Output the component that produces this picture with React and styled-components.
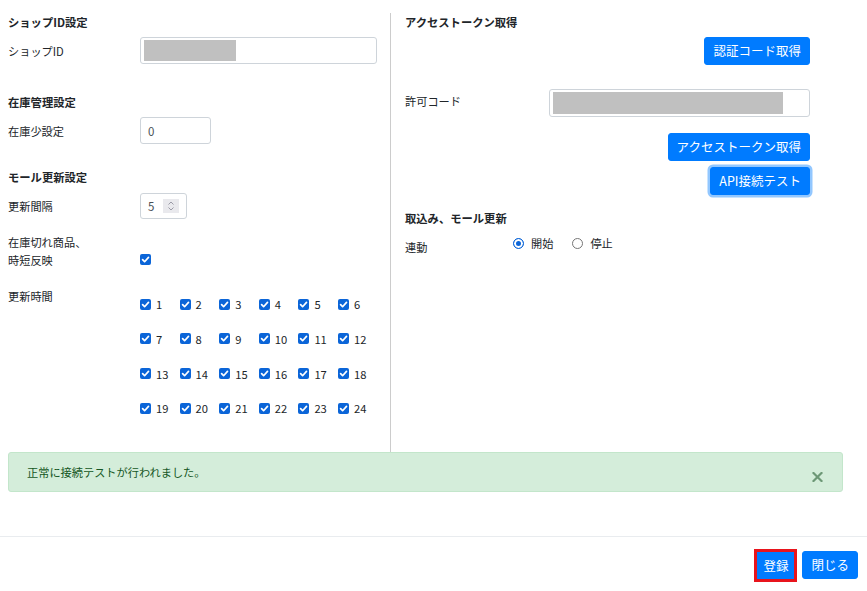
import React from 'react';
import styled, { createGlobalStyle } from 'styled-components';

const Global = createGlobalStyle`
  html, body { margin: 0; padding: 0; background: #fff; }
  body {
    font-family: "Noto Sans CJK JP", "Noto Sans", sans-serif;
    color: #212529;
    font-size: 11.2px;
  }
  * { box-sizing: border-box; }
`;

const Body = styled.div`
  padding: 13px 24px 0 8px;
`;

const Columns = styled.div`
  display: grid;
  grid-template-columns: 383px 1fr;
`;

const LeftCol = styled.div`
  display: flex;
  flex-direction: column;
  border-right: 1px solid #cccccc;
  padding-bottom: 26px;
`;

const RightCol = styled.div`
  display: flex;
  flex-direction: column;
  padding: 0 33px 0 14px;
`;

const Title = styled.div`
  font-weight: 700;
  font-size: 11.3px;
  line-height: 18px;
  margin-top: ${p => p.$mt || 0}px;
`;

const Row = styled.div`
  display: flex;
  align-items: ${p => p.$align || 'center'};
  margin-top: ${p => p.$mt || 0}px;
`;

const Label = styled.div`
  width: ${p => p.$w}px;
  flex-shrink: 0;
  line-height: 18px;
  font-size: 11.2px;
  padding-top: ${p => p.$pt || 0}px;
  padding-bottom: ${p => p.$pb || 0}px;
`;

const TextBox = styled.div`
  width: ${p => p.$w}px;
  height: ${p => p.$h || 27}px;
  border: 1px solid #ced4da;
  border-radius: 3px;
  background: #fff;
  display: flex;
  align-items: center;
  padding: ${p => p.$pad || '0 7px'};
  color: #495057;
  font-size: 11.5px;
`;

const Redacted = styled.span`
  display: block;
  width: ${p => p.$w}px;
  height: ${p => p.$h}px;
  background: #c0c0c0;
`;

const Spinner = styled.span`
  margin-left: auto;
  width: 16px;
  height: 14px;
  background: #e9e9ed;
  display: flex;
  align-items: center;
  justify-content: center;
`;

const CheckBoxBox = styled.span`
  width: 11px;
  height: 11px;
  border-radius: 2px;
  background: #0b65d8;
  display: inline-flex;
  align-items: center;
  justify-content: center;
  flex-shrink: 0;
  margin-bottom: ${p => p.$mb || 0}px;
`;

const HourGrid = styled.div`
  display: grid;
  grid-template-columns: repeat(6, 39.6px);
  grid-auto-rows: 34.67px;
`;

const HourItem = styled.label`
  display: flex;
  align-items: center;
  gap: 5px;
  font-size: 11.2px;
  line-height: 14px;
`;

const ButtonRow = styled.div`
  display: flex;
  justify-content: flex-end;
  margin-top: ${p => p.$mt || 0}px;
`;

const Button = styled.button`
  font-family: inherit;
  font-size: 12.5px;
  line-height: 18px;
  padding: 4px 8px;
  border: 1px solid #007bff;
  background: #007bff;
  color: #fff;
  border-radius: 3px;
  cursor: pointer;
  ${p => p.$focus && 'box-shadow: 0 0 0 2.5px rgba(38, 143, 255, 0.5);'}
`;

const MarkedButton = styled(Button)`
  border: 3px solid #e8141c;
  border-radius: 0;
  padding: 4px 6px;
  line-height: 19px;
`;

const RadioGroup = styled.div`
  display: flex;
  align-items: center;
  gap: 19px;
`;

const RadioItem = styled.label`
  display: flex;
  align-items: center;
  gap: 7px;
  line-height: 18px;
  font-size: 11.2px;
`;

const RadioDot = styled.span`
  width: 11px;
  height: 11px;
  border-radius: 50%;
  flex-shrink: 0;
  border: 1px solid ${p => (p.$on ? '#0b65d8' : '#767676')};
  background: ${p => (p.$on ? '#0b65d8' : '#fff')};
  box-shadow: ${p => (p.$on ? 'inset 0 0 0 2px #fff' : 'none')};
`;

const Alert = styled.div`
  height: 40px;
  border: 1px solid #c3e6cb;
  background: #d4edda;
  border-radius: 3px;
  color: #155724;
  display: flex;
  align-items: center;
  padding: 0 19px 0 18px;
  font-size: 11.2px;
  line-height: 18px;
`;

const AlertText = styled.span`
  flex: 1;
`;

const CloseBtn = styled.span`
  display: flex;
  padding-top: 11px;
`;

const Footer = styled.div`
  margin-top: 44px;
  border-top: 1px solid #e9ecef;
  display: flex;
  justify-content: flex-end;
  align-items: center;
  gap: 5px;
  padding: 12px 9px 9px;
`;

const Check = ({ mb }) => (
  <CheckBoxBox $mb={mb}>
    <svg width="11" height="11" viewBox="0 0 11 11">
      <polyline points="2.6,5.7 4.6,7.7 8.5,3.4" fill="none" stroke="#fff" strokeWidth="1.7" strokeLinecap="round" strokeLinejoin="round" />
    </svg>
  </CheckBoxBox>
);

const hours = Array.from({ length: 24 }, (_, i) => i + 1);

export default function App() {
  return (
    <>
      <Global />
      <Body>
        <Columns>
          <LeftCol>
            <Title>ショップID設定</Title>
            <Row $mt={6}>
              <Label $w={132}>ショップID</Label>
              <TextBox $w={237} $pad="0 3px">
                <Redacted $w={92} $h={21} />
              </TextBox>
            </Row>

            <Title $mt={29}>在庫管理設定</Title>
            <Row $mt={6}>
              <Label $w={132}>在庫少設定</Label>
              <TextBox $w={71}>0</TextBox>
            </Row>

            <Title $mt={24}>モール更新設定</Title>
            <Row $mt={7}>
              <Label $w={132}>更新間隔</Label>
              <TextBox $w={47} $h={26}>
                5
                <Spinner>
                  <svg width="8" height="12" viewBox="0 0 8 12">
                    <polyline points="1.5,4.5 4,2 6.5,4.5" fill="none" stroke="#9a9aa6" strokeWidth="1" />
                    <polyline points="1.5,7.5 4,10 6.5,7.5" fill="none" stroke="#9a9aa6" strokeWidth="1" />
                  </svg>
                </Spinner>
              </TextBox>
            </Row>

            <Row $mt={14} $align="flex-end">
              <Label $w={132}>在庫切れ商品、<br />時短反映</Label>
              <Check mb={4} />
            </Row>

            <Row $mt={18} $align="flex-start">
              <Label $w={132}>更新時間</Label>
              <HourGrid>
                {hours.map(h => (
                  <HourItem key={h}>
                    <Check />
                    {h}
                  </HourItem>
                ))}
              </HourGrid>
            </Row>
          </LeftCol>

          <RightCol>
            <Title>アクセストークン取得</Title>
            <ButtonRow $mt={6}>
              <Button>認証コード取得</Button>
            </ButtonRow>
            <Row $mt={24}>
              <Label $w={144} $pb={4}>許可コード</Label>
              <TextBox $w={261} $h={28} $pad="0 3px">
                <Redacted $w={230} $h={22} />
              </TextBox>
            </Row>
            <ButtonRow $mt={16}>
              <Button>アクセストークン取得</Button>
            </ButtonRow>
            <ButtonRow $mt={6}>
              <Button $focus>API接続テスト</Button>
            </ButtonRow>

            <Title $mt={14}>取込み、モール更新</Title>
            <Row $mt={7} $align="flex-start">
              <Label $w={108} $pt={4}>連動</Label>
              <RadioGroup>
                <RadioItem>
                  <RadioDot $on />
                  開始
                </RadioItem>
                <RadioItem>
                  <RadioDot />
                  停止
                </RadioItem>
              </RadioGroup>
            </Row>
          </RightCol>
        </Columns>

        <Alert>
          <AlertText>正常に接続テストが行われました。</AlertText>
          <CloseBtn>
            <svg width="11" height="10" viewBox="0 0 11 10">
              <path d="M1.5 1 L9.5 9 M9.5 1 L1.5 9" stroke="#6d9876" strokeWidth="2.2" strokeLinecap="square" />
            </svg>
          </CloseBtn>
        </Alert>
      </Body>

      <Footer>
        <MarkedButton>登録</MarkedButton>
        <Button>閉じる</Button>
      </Footer>
    </>
  );
}
